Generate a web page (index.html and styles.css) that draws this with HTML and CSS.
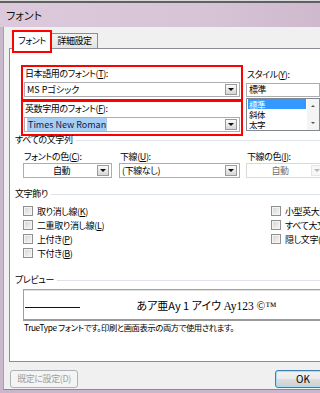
FILE: index.html
```html
<!DOCTYPE html>
<html lang="ja">
<head>
    <meta charset="UTF-8">
    <meta name="viewport" content="width=device-width, initial-scale=1.0">
    <title>フォント</title>
    <link rel="stylesheet" href="styles.css">
</head>
<body>
    <div class="window">
        <div class="titlebar">フォント</div>
        <div class="client">
            <div class="tabs">
                <div class="tab active">フォント</div>
                <div class="tab">詳細設定</div>
            </div>
            <div class="panel">
                <div class="font-row">
                    <div class="font-groups">
                        <div class="group">
                            <div class="label">日本語用のフォント(<u>T</u>):</div>
                            <div class="combo"><span class="value latin">MS Pゴシック</span><span class="drop"></span></div>
                        </div>
                        <div class="group second">
                            <div class="label">英数字用のフォント(<u>F</u>):</div>
                            <div class="combo"><span class="value"><span class="sel">Times New Roman</span></span><span class="drop"></span></div>
                        </div>
                    </div>
                    <div class="style-col">
                        <div class="label">スタイル(<u>Y</u>):</div>
                        <div class="edit">標準</div>
                        <div class="listbox">
                            <ul>
                                <li class="selected">標準</li>
                                <li>斜体</li>
                                <li>太字</li>
                            </ul>
                            <div class="scroll"><span class="up"></span><span class="down"></span></div>
                        </div>
                    </div>
                </div>

                <div class="section"><span>すべての文字列</span></div>
                <div class="color-row">
                    <div class="field col1">
                        <div class="label">フォントの色(<u>C</u>):</div>
                        <div class="combo center"><span class="value">自動</span><span class="drop"></span></div>
                    </div>
                    <div class="field col2">
                        <div class="label">下線(<u>U</u>):</div>
                        <div class="combo"><span class="value">(下線なし)</span><span class="drop"></span></div>
                    </div>
                    <div class="field col3">
                        <div class="label">下線の色(<u>I</u>):</div>
                        <div class="combo center disabled"><span class="value">自動</span><span class="drop"></span></div>
                    </div>
                </div>

                <div class="section deco"><span>文字飾り</span></div>
                <div class="checks">
                    <label class="check"><span class="box"></span><span>取り消し線(<u>K</u>)</span></label>
                    <label class="check"><span class="box"></span><span>小型英大文字(<u>M</u>)</span></label>
                    <label class="check"><span class="box"></span><span>二重取り消し線(<u>L</u>)</span></label>
                    <label class="check"><span class="box"></span><span>すべて大文字(<u>A</u>)</span></label>
                    <label class="check"><span class="box"></span><span>上付き(<u>P</u>)</span></label>
                    <label class="check"><span class="box"></span><span>隠し文字(<u>H</u>)</span></label>
                    <label class="check"><span class="box"></span><span>下付き(<u>B</u>)</span></label>
                </div>

                <div class="section preview-head"><span>プレビュー</span></div>
                <div class="preview">
                    <span class="rule"></span>
                    <span class="sample">あア亜Ay 1 アイウ <span class="serif">Ay123 ©™</span></span>
                    <span class="rule"></span>
                </div>
                <div class="note">TrueType フォントです。印刷と画面表示の両方で使用されます。</div>
            </div>
            <div class="buttons">
                <div class="btn disabled">既定に設定(D)</div>
                <div class="btn default">OK</div>
            </div>
        </div>
    </div>
</body>
</html>
```

FILE: styles.css
```css
* {
    box-sizing: border-box;
}
html, body {
    margin: 0;
    padding: 0;
}
body {
    width: 320px;
    height: 393px;
    overflow: hidden;
    background: #f0f0f0;
    font-family: "Noto Sans CJK JP", sans-serif;
    font-size: 9px;
    font-feature-settings: "palt";
    letter-spacing: -0.4px;
    color: #000;
}
u {
    text-decoration: underline;
    text-underline-offset: 1px;
}

.window {
    width: 420px;
    height: 393px;
    background: #c9b8cb;
    padding-left: 3px;
}
.titlebar {
    height: 27px;
    margin-left: -3px;
    padding-left: 6px;
    border-top: 1px solid #d8d8d8;
    box-shadow: inset 0 2px 0 #606060;
    background: linear-gradient(to right, #dccadc 0%, #d6c3d6 50%, #cdb7cc 80%, #e3d7e5 100%);
    font-size: 11px;
    letter-spacing: 0;
    line-height: 28px;
    color: #111;
}

.client {
    height: 363px;
    background: #f0f0f0;
    border-left: 1px solid #a6a0a8;
    border-bottom: 1px solid #8d8a8f;
    padding: 3px 0 0 5px;
}

/* tabs */
.tabs {
    height: 18px;
    display: flex;
    align-items: flex-end;
    padding-left: 4px;
}
.tab {
    height: 15px;
    line-height: 14px;
    border: 1px solid #898c95;
    border-bottom: none;
    background: linear-gradient(#f3f3f3, #e3e3e3);
    text-align: center;
    white-space: nowrap;
}
.tab.active {
    position: relative;
    z-index: 1;
    height: 19px;
    width: 38px;
    margin-bottom: -1px;
    line-height: 19px;
    background: #fff;
}
.tab.active::after {
    content: "";
    position: absolute;
    top: -1px;
    left: -2px;
    right: -2px;
    bottom: -4px;
    border: 2px solid #f00;
}
.tab + .tab {
    width: 47px;
}

.panel {
    height: 314px;
    background: #fff;
    border: 1px solid #898c95;
    overflow: hidden;
}

.label {
    line-height: 12px;
    padding-left: 1px;
    white-space: nowrap;
}

/* font selection */
.font-row {
    display: flex;
    margin: 16px 0 0 11px;
}
.group {
    width: 222px;
    height: 36px;
    border: 2px solid #f00;
    padding: 1px 1px 2px 1px;
}
.group.second {
    margin-top: -1px;
}
.group .combo {
    margin-top: 2px;
}

.combo {
    height: 15px;
    display: flex;
    align-items: center;
    background: #fff;
    border: 1px solid #abadb3;
    white-space: nowrap;
}
.combo .value {
    flex: 1;
    padding-left: 2px;
    line-height: 13px;
    overflow: hidden;
}
.combo .value.latin {
    letter-spacing: 0;
}
.combo.center .value {
    text-align: center;
}
.combo .sel {
    background: #a8cdf3;
    color: #0c1a4a;
    padding: 0 1px;
    letter-spacing: 0;
}
.drop {
    width: 12px;
    height: 11px;
    margin-right: 2px;
    border: 1px solid #9b9b9b;
    background: linear-gradient(#fbfbfb, #d6d6d6);
    display: flex;
    align-items: center;
    justify-content: center;
}
.drop::after {
    content: "";
    border-left: 3px solid transparent;
    border-right: 3px solid transparent;
    border-top: 3px solid #111;
}
.combo.disabled {
    border-color: #d9d9d9;
    color: #6d6d6d;
}
.combo.disabled .drop {
    border-color: #e6e6e6;
    background: #f7f7f7;
}
.combo.disabled .drop::after {
    border-top-color: #b5b5b5;
}

.style-col {
    width: 74px;
    margin-left: 3px;
    padding-top: 4px;
}
.edit {
    height: 14px;
    margin-top: 2px;
    border: 1px solid #abadb3;
    padding-left: 2px;
    line-height: 12px;
}
.listbox {
    height: 33px;
    margin-top: 1px;
    border: 1px solid #828790;
    display: flex;
}
.listbox ul {
    flex: 1;
    list-style: none;
    margin: 0;
    padding: 0 1px;
}
.listbox li {
    height: 10px;
    line-height: 10px;
    font-size: 8.5px;
    padding-left: 1px;
}
.listbox li.selected {
    background: #3399ff;
    color: #fff;
}
.scroll {
    width: 12px;
    background: #f4f4f4;
    display: flex;
    flex-direction: column;
    justify-content: space-between;
    align-items: center;
    padding: 6px 0 6px;
}
.scroll span {
    border-left: 2px solid transparent;
    border-right: 2px solid transparent;
}
.scroll .up {
    border-bottom: 2px solid #555;
}
.scroll .down {
    border-top: 2px solid #555;
}

/* sections */
.section {
    display: flex;
    align-items: center;
    gap: 3px;
    margin: -1px 0 0 5px;
    line-height: 10px;
}
.section::after {
    content: "";
    flex: 1;
    height: 1px;
    background: #dde3e8;
}
.section.deco {
    margin-top: 11px;
}
.section.preview-head {
    margin-top: 15px;
}

.color-row {
    display: flex;
    margin: 6px 0 0 13px;
}
.col1 {
    width: 89px;
}
.col2 {
    width: 121px;
    margin-left: 7px;
}
.col3 {
    width: 80px;
    margin-left: 6px;
}

/* checkboxes */
.checks {
    display: grid;
    grid-template-columns: 248px auto;
    grid-auto-rows: 14px;
    margin: 5px 0 0 13px;
}
.check {
    display: flex;
    align-items: center;
    gap: 4px;
    white-space: nowrap;
}
.box {
    width: 10px;
    height: 10px;
    border: 1px solid #8e8f8f;
    background: linear-gradient(135deg, #d4d4d4, #f6f6f6);
    box-shadow: inset 0 0 0 1px #f4f4f4;
}

/* preview */
.preview {
    width: 367px;
    height: 32px;
    margin: 4px 0 0 13px;
    border: 1px solid #a0a0a0;
    border-bottom: 2px solid #9a9a9a;
    box-shadow: inset 0 1px 0 #e2e2e2;
    display: flex;
    align-items: center;
    padding: 0 1px;
    letter-spacing: 0;
}
.rule {
    width: 55px;
    height: 1px;
    background: #111;
    margin-top: 6px;
}
.sample {
    flex: 1;
    text-align: center;
    font-size: 11px;
    white-space: nowrap;
}
.serif {
    font-family: "Liberation Serif", serif;
    font-size: 11.5px;
}
.note {
    margin: 1px 0 0 14px;
    line-height: 10px;
    font-size: 8.3px;
    white-space: nowrap;
}

/* buttons */
.buttons {
    display: flex;
    gap: 197px;
    margin-top: 8px;
    padding-left: 1px;
}
.btn {
    height: 18px;
    line-height: 16px;
    text-align: center;
    border-radius: 3px;
    border: 1px solid #adb2b5;
}
.btn.disabled {
    width: 68px;
    background: #f4f4f4;
    color: #a0a0a0;
}
.btn.default {
    width: 56px;
    border-color: #3c7fb1;
    box-shadow: inset 0 0 0 1px #a6dcf5;
    background: linear-gradient(#f2f2f2 0%, #ebebeb 50%, #dddddd 51%, #cfcfcf 100%);
    font-size: 10px;
    letter-spacing: 0;
}
```
